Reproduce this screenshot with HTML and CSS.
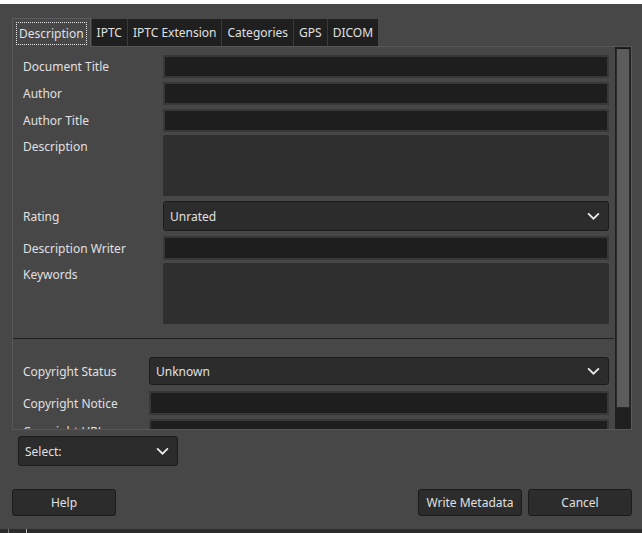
FILE: index.html
```html
<!DOCTYPE html>
<html>
<head>
    <title>Metadata Editor</title>
    <link rel="stylesheet" href="styles.css">
</head>
<body>
    <div class="top-strip"></div>

    <div class="dialog">
        <div class="tabs">
            <div class="tab active"><span class="focus">Description</span></div>
            <div class="tab">IPTC</div>
            <div class="tab">IPTC Extension</div>
            <div class="tab">Categories</div>
            <div class="tab">GPS</div>
            <div class="tab">DICOM</div>
        </div>

        <div class="panel">
            <div class="content">
                <div class="section">
                    <div class="row">
                        <label>Document Title</label>
                        <div class="entry"></div>
                    </div>
                    <div class="row">
                        <label>Author</label>
                        <div class="entry"></div>
                    </div>
                    <div class="row before-tall">
                        <label>Author Title</label>
                        <div class="entry"></div>
                    </div>
                    <div class="row tall">
                        <label>Description</label>
                        <div class="textarea"></div>
                    </div>
                    <div class="row combo-row">
                        <label>Rating</label>
                        <div class="combo">Unrated
                            <svg class="chevron" viewBox="0 0 12 7"><path d="M1 1 L6 6 L11 1"/></svg>
                        </div>
                    </div>
                    <div class="row writer">
                        <label>Description Writer</label>
                        <div class="entry"></div>
                    </div>
                    <div class="row tall">
                        <label>Keywords</label>
                        <div class="textarea"></div>
                    </div>
                </div>

                <div class="section second">
                    <div class="row combo-row">
                        <label>Copyright Status</label>
                        <div class="combo">Unknown
                            <svg class="chevron" viewBox="0 0 12 7"><path d="M1 1 L6 6 L11 1"/></svg>
                        </div>
                    </div>
                    <div class="row">
                        <label>Copyright Notice</label>
                        <div class="entry"></div>
                    </div>
                    <div class="row">
                        <label>Copyright URL</label>
                        <div class="entry"></div>
                    </div>
                </div>
            </div>

            <div class="scrollbar">
                <div class="thumb"></div>
            </div>
        </div>

        <div class="select-wrap">
            <div class="combo select">Select:
                <svg class="chevron" viewBox="0 0 12 7"><path d="M1 1 L6 6 L11 1"/></svg>
            </div>
        </div>

        <div class="buttons">
            <button class="btn">Help</button>
            <div class="spacer"></div>
            <button class="btn">Write Metadata</button>
            <button class="btn">Cancel</button>
        </div>
    </div>

    <div class="bottom-strip">
        <span class="tick"></span>
        <span class="tick"></span>
    </div>
</body>
</html>
```

FILE: styles.css
```css
body {
    margin: 0;
    background: #474747;
    font-family: "Noto Sans", "Open Sans", sans-serif;
    font-size: 12px;
    color: #e0e0e2;
    height: 533px;
    overflow: hidden;
}

.top-strip {
    height: 4px;
    background: #ffffff;
}

.dialog {
    padding: 13px 10px 0 12px;
    height: 512px;
    box-sizing: border-box;
}

/* tab bar */
.tabs {
    display: flex;
    height: 29px;
    align-items: flex-end;
}

.tab {
    height: 27px;
    line-height: 28px;
    padding: 0 5px;
    background: #1f1f1f;
    border-left: 1px solid #3a3a3a;
    white-space: nowrap;
}

.tab.active {
    height: 29px;
    line-height: 29px;
    background: #474747;
    border: 1px solid #5c5c5c;
    border-bottom: none;
    padding: 0 3px;
    box-sizing: border-box;
    margin-bottom: -1px;
    position: relative;
    z-index: 1;
}

.tab.active .focus {
    border: 1px dotted #e8e8e8;
    padding: 2px 2px;
}

/* main panel */
.panel {
    display: flex;
    height: 384px;
    border: 1px solid #575757;
    border-right: 1px solid #5a5a5a;
    box-sizing: border-box;
    width: 620px;
}

.content {
    flex: 1;
    overflow: hidden;
}

.section {
    display: flex;
    flex-direction: column;
    padding: 8px 5px 14px 10px;
    border-bottom: 1px solid #1f1f1f;
}

.section.second {
    padding-top: 18px;
    border-bottom: none;
}

.row {
    display: grid;
    grid-template-columns: 140px 1fr;
    align-items: center;
    margin-bottom: 4px;
}

.row:last-child {
    margin-bottom: 0;
}

.section.second .row {
    grid-template-columns: 126px 1fr;
}

.row.before-tall {
    margin-bottom: 3px;
}

.row.tall {
    align-items: start;
    margin-bottom: 5px;
}

.row.tall:last-child {
    margin-bottom: 0;
}

.row.tall label {
    padding-top: 3px;
}

.row.combo-row {
    margin-bottom: 5px;
}

.section.second .row.combo-row {
    margin-bottom: 6px;
}

.row.writer {
    margin-bottom: 3px;
}

.row.writer .entry {
    height: 24px;
}

label {
    white-space: nowrap;
}

.entry {
    height: 23px;
    background: #1e1e1e;
    border: 2px solid #383838;
    box-sizing: border-box;
}

.section.second .entry {
    height: 24px;
}

.textarea {
    height: 61px;
    background: #2f2f2f;
    border-radius: 2px;
}

.combo {
    height: 30px;
    background: #2c2c2c;
    border: 1px solid #1b1b1b;
    border-radius: 3px;
    box-sizing: border-box;
    display: flex;
    align-items: center;
    padding: 0 6px;
    position: relative;
}

.section.second .combo {
    height: 28px;
}

.chevron {
    position: absolute;
    right: 8px;
    top: 50%;
    width: 13px;
    height: 8px;
    margin-top: -4px;
    fill: none;
    stroke: #ececec;
    stroke-width: 1.6;
}

/* scrollbar */
.scrollbar {
    width: 17px;
    background: #1f1f1f;
    border-left: 1px solid #474747;
    padding: 1px 1px 0 1px;
    box-sizing: border-box;
}

.thumb {
    height: 360px;
    background: #5c5c5c;
    border: 1px solid #2a2a2a;
    border-top-color: #161616;
    box-sizing: border-box;
}

.select-wrap {
    padding: 6px 0 0 6px;
}

.combo.select {
    width: 160px;
    height: 30px;
}

.buttons {
    display: flex;
    margin-top: 23px;
    gap: 6px;
}

.spacer {
    flex: 1;
}

.btn {
    width: 104px;
    height: 27px;
    background: #2c2c2c;
    border: 1px solid #1b1b1b;
    border-radius: 3px;
    color: #e0e0e2;
    font-family: "Noto Sans", "Open Sans", sans-serif;
    font-size: 12px;
    padding: 0;
}

.bottom-strip {
    position: absolute;
    left: 0;
    right: 0;
    top: 529px;
    height: 4px;
    background: #2b2b2b;
}

.tick {
    position: absolute;
    top: 0;
    width: 1px;
    height: 4px;
    background: #777;
}

.tick:first-child {
    left: 8px;
}

.tick:last-child {
    left: 26px;
    background: #bbb;
}
```
